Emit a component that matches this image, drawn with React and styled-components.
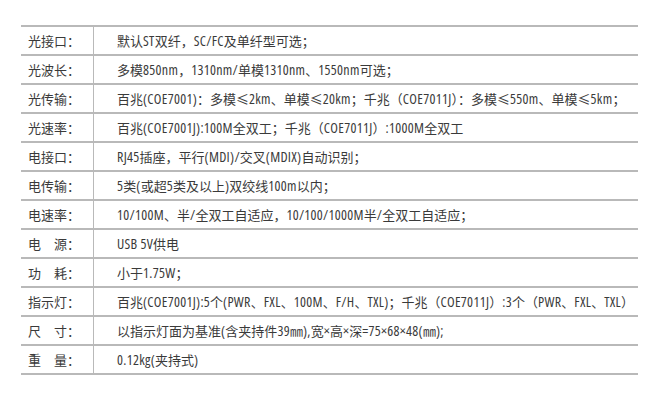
import React from "react";
import styled, { createGlobalStyle } from "styled-components";

const Global = createGlobalStyle`
  html, body { margin: 0; padding: 0; background: #fff; }
  body { font-family: "Noto Sans CJK SC", "Noto Sans", sans-serif; }
`;

const Page = styled.div`
  width: 670px;
  height: 405px;
  padding: 25px 0 0 21px;
  box-sizing: border-box;
`;

const Table = styled.div`
  width: 617px;
  border-top: 2px solid #b9b9b9;
  display: flex;
  flex-direction: column;
`;

const Row = styled.div`
  display: grid;
  grid-template-columns: 73px 1fr;
  height: 29px;
  box-sizing: border-box;
  border-bottom: 2px solid #b9b9b9;
`;

const Label = styled.div`
  border-right: 1px solid #b9b9b9;
  padding-left: 7px;
  font-family: "Noto Sans CJK SC", sans-serif;
  font-size: 13px;
  line-height: 27px;
  color: #3a3a3a;
  white-space: pre;
`;

const Value = styled.div`
  padding-left: 23px;
  font-family: "Noto Sans CJK SC", sans-serif;
  font-size: 13px;
  line-height: 27px;
  color: #3a3a3a;
  white-space: pre;
  overflow: hidden;
`;

const Latin = styled.span`
  font-family: "Open Sans", sans-serif;
  font-stretch: 75%;
  font-size: 14px;
  letter-spacing: 0.3px;
`;

const rows = [
  ["光接口：", "默认ST双纤，SC/FC及单纤型可选；"],
  ["光波长：", "多模850nm，1310nm/单模1310nm、1550nm可选；"],
  ["光传输：", "百兆(COE7001)：多模≤2km、单模≤20km；千兆（COE7011J）：多模≤550m、单模≤5km；"],
  ["光速率：", "百兆(COE7001J):100M全双工；千兆（COE7011J）:1000M全双工"],
  ["电接口：", "RJ45插座，平行(MDI)/交叉(MDIX)自动识别；"],
  ["电传输：", "5类(或超5类及以上)双绞线100m以内；"],
  ["电速率：", "10/100M、半/全双工自适应，10/100/1000M半/全双工自适应；"],
  ["电　源：", "USB 5V供电"],
  ["功　耗：", "小于1.75W；"],
  ["指示灯：", "百兆(COE7001J):5个(PWR、FXL、100M、F/H、TXL)；千兆（COE7011J）:3个（PWR、FXL、TXL）"],
  ["尺　寸：", "以指示灯面为基准(含夹持件39㎜),宽×高×深=75×68×48(㎜);"],
  ["重　量：", "0.12kg(夹持式)"],
];

function Mixed({ text }) {
  const parts = text.split(/([\x20-\x7E×]+)/);
  return parts.map((p, i) =>
    i % 2 === 1 ? <Latin key={i}>{p}</Latin> : <React.Fragment key={i}>{p}</React.Fragment>
  );
}

export default function App() {
  return (
    <>
      <Global />
      <Page>
        <Table>
          {rows.map(([l, v]) => (
            <Row key={l}>
              <Label>{l}</Label>
              <Value>
                <Mixed text={v} />
              </Value>
            </Row>
          ))}
        </Table>
      </Page>
    </>
  );
}
